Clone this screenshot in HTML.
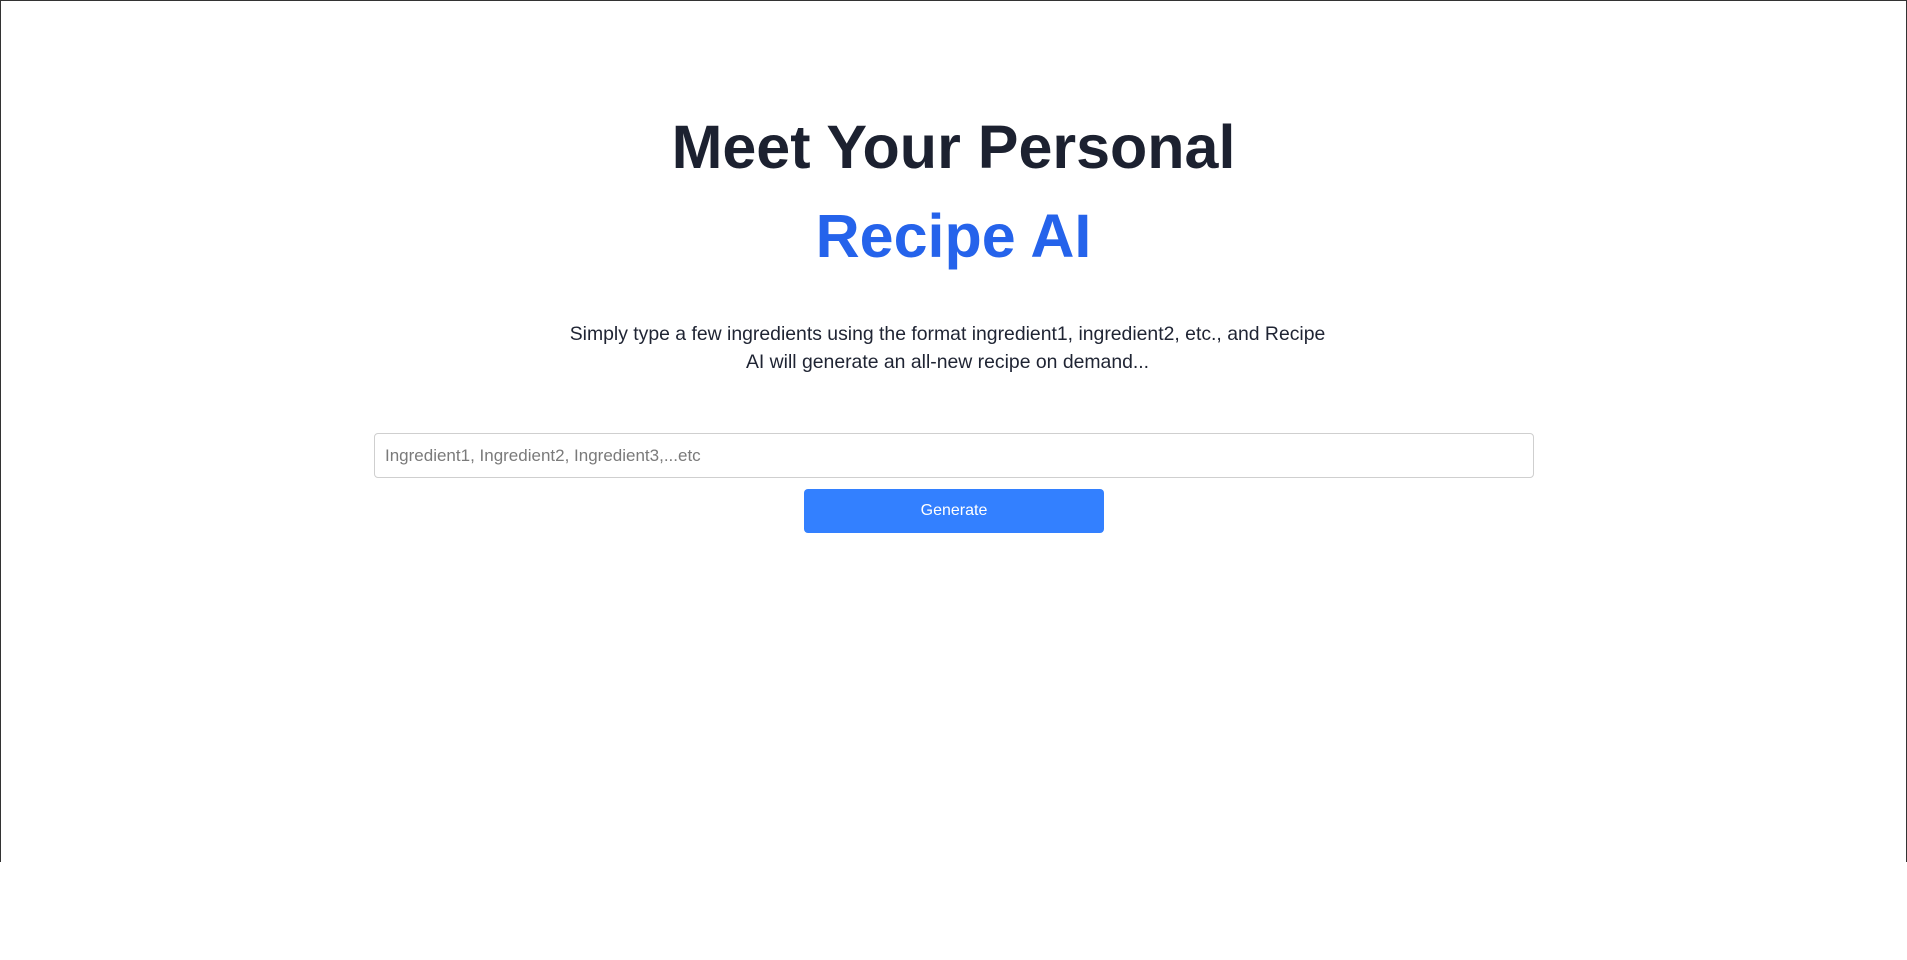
<!DOCTYPE html>
<html><head><meta charset="utf-8"><style>
html,body{margin:0;padding:0;background:#fff;width:1907px;height:960px;overflow:hidden;font-family:"Liberation Sans",Arial,sans-serif;}
.frame{position:absolute;left:0;top:0;width:1905px;height:861px;border:1px solid #333;border-bottom:none;}
.h1{position:absolute;left:0;width:1907px;text-align:center;font-weight:bold;font-size:61px;letter-spacing:0px;line-height:1;white-space:nowrap;}
.p{position:absolute;left:-6px;width:1907px;text-align:center;font-size:19.4px;color:#1f2433;line-height:28px;}
.inp{position:absolute;left:374px;top:433px;width:1158px;height:43px;border:1px solid #cfcfcf;border-radius:4px;box-sizing:content-box;}
.inp span{position:absolute;left:10px;top:12px;font-size:17px;color:#7a7a7a;}
.btn{position:absolute;left:804px;top:489px;width:300px;height:44px;background:#3380ff;border-radius:4px;color:#fff;font-size:16px;text-align:center;line-height:44px;}
</style></head><body>
<div class="frame"></div>
<div class="h1" style="top:117px;color:#1c2130;">Meet Your Personal</div>
<div class="h1" style="top:206px;color:#2563eb;">Recipe AI</div>
<div class="p" style="top:320px;">Simply type a few ingredients using the format ingredient1, ingredient2, etc., and Recipe<br>AI will generate an all-new recipe on demand...</div>
<div class="inp"><span>Ingredient1, Ingredient2, Ingredient3,...etc</span></div>
<div class="btn">Generate</div>
</body></html>
